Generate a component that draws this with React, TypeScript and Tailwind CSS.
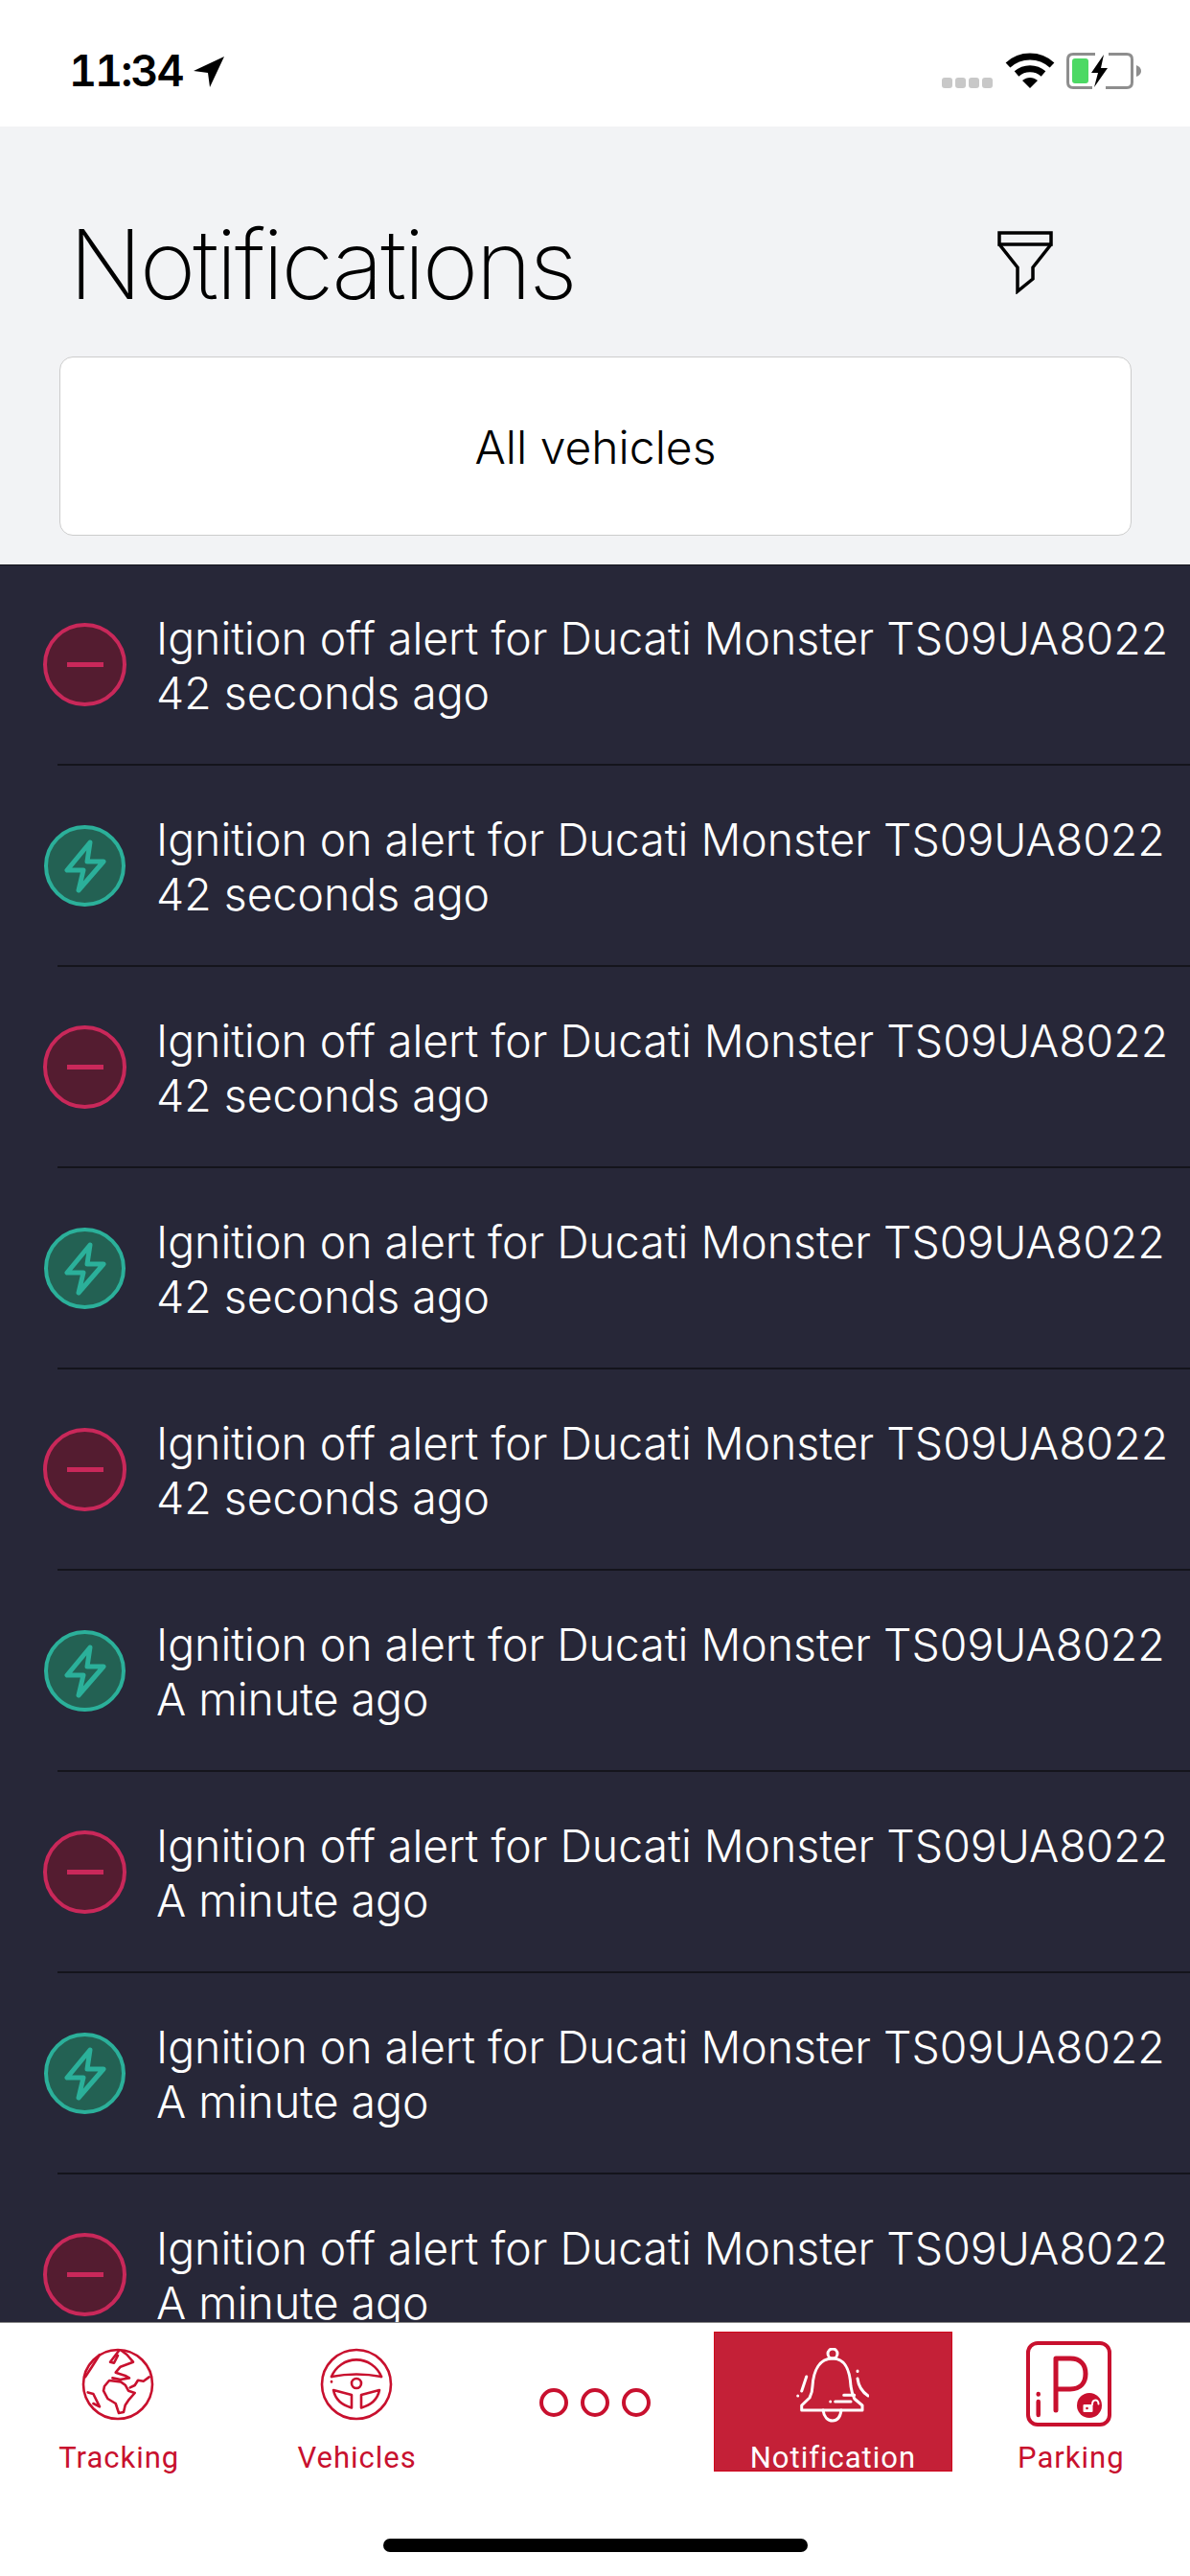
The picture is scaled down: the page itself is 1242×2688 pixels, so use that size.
// Notifications screen
const alerts = [
  { on: false, time: '42 seconds ago' },
  { on: true, time: '42 seconds ago' },
  { on: false, time: '42 seconds ago' },
  { on: true, time: '42 seconds ago' },
  { on: false, time: '42 seconds ago' },
  { on: true, time: 'A minute ago' },
  { on: false, time: 'A minute ago' },
  { on: true, time: 'A minute ago' },
  { on: false, time: 'A minute ago' },
]

function StatusBar() {
  return (
    <div className="flex h-[132px] shrink-0 items-start bg-white pl-[72px] pr-[49px] pt-[55px]">
      <span className="font-['Inter',sans-serif] text-[45px] leading-[38px] font-semibold tracking-[-2px] text-black tabular-nums">11:34</span>
      <svg className="ml-[11px] mt-[4px]" width="32" height="32" viewBox="0 0 32 32">
        <path d="M32 0 L0 15 L15 17 L17 32 Z" fill="#000" />
      </svg>
      <div className="ml-auto mt-[26px] flex gap-[3px]">
        <span className="h-[11px] w-[11px] rounded-[3px] bg-[#c8c8c8]" />
        <span className="h-[11px] w-[11px] rounded-[3px] bg-[#c8c8c8]" />
        <span className="h-[11px] w-[11px] rounded-[3px] bg-[#c8c8c8]" />
        <span className="h-[11px] w-[11px] rounded-[3px] bg-[#c8c8c8]" />
      </div>
      <svg className="ml-[13px]" width="52" height="38" viewBox="0 0 52 38" fill="none" stroke="#000" strokeWidth="7">
        <path d="M3 13 C16 1 36 1 49 13" />
        <path d="M12 22 C20 15 32 15 40 22" />
        <path d="M26 37 L18 29 C23 25 29 25 34 29 Z" fill="#000" stroke="none" />
      </svg>
      <svg className="ml-[12px]" width="80" height="38" viewBox="0 0 80 38" fill="none">
        <path d="M30 1.5 H7 Q1.5 1.5 1.5 7 V31 Q1.5 36.5 7 36.5 H27 M41 36.5 H63 Q68.5 36.5 68.5 31 V7 Q68.5 1.5 63 1.5 H44" stroke="#8e8e8e" strokeWidth="3" />
        <rect x="6" y="6" width="17" height="26" rx="3" fill="#4cd964" />
        <path d="M39 2 L26 21 H33 L29 36 L43 16 H36 Z" fill="#000" />
        <path d="M73 13 Q78 15 78 19 Q78 23 73 25 Z" fill="#8e8e8e" />
      </svg>
    </div>
  )
}

function Header() {
  return (
    <div className="h-[457px] shrink-0 bg-[#f2f3f5] pl-[62px] pr-[61px] pt-[84px]">
      <div className="flex h-[156px] items-start justify-between">
        <h1 className="ml-[10px] font-['Inter',sans-serif] text-[100px] leading-[120px] font-[150] tracking-[-2.9px] text-black">Notifications</h1>
        <svg className="mr-[82px] mt-[25px]" width="58" height="66" viewBox="0 0 58 66" fill="none" stroke="#000" strokeWidth="3.5">
          <path d="M2 2 H56 V14 H2 Z" />
          <path d="M2 14 L21 38 V63 L37 50 V38 L56 14" />
        </svg>
      </div>
      <div className="flex h-[187px] items-center justify-center rounded-[14px] border border-[#cccccc] bg-white pt-[2px] font-['Inter',sans-serif] text-[48px] font-[350] text-black">
        All vehicles
      </div>
    </div>
  )
}

function AlertIcon({ on }: { on: boolean }) {
  if (on) {
    return (
      <div className="flex h-[85px] w-[85px] items-center justify-center rounded-full border-[4px] border-[#2bb09a] bg-[#236153]">
        <svg width="44" height="56" viewBox="0 0 44 56" fill="none" stroke="#2bb09a" strokeWidth="5" strokeLinejoin="round" strokeLinecap="round">
          <path d="M27 3 L3 32 H20 L15 53 L41 23 H24 Z" />
        </svg>
      </div>
    )
  }
  return (
    <div className="flex h-[87px] w-[87px] items-center justify-center rounded-full border-[4px] border-[#c9285a] bg-[#541c30]">
      <span className="h-[5px] w-[38px] bg-[#c9285a]" />
    </div>
  )
}

function AlertRow({ on, time }: { on: boolean; time: string }) {
  return (
    <div className="h-[210px] shrink-0">
      <div className="flex h-[209px] items-center border-b-2 border-[#14141c] ml-[60px] -mb-px">
        <div className="-ml-[15px] flex w-[118px] shrink-0 justify-center pr-[31px]">
          <AlertIcon on={on} />
        </div>
        <div className="pt-[3px] font-['Inter',sans-serif] text-[46.4px] leading-[57px] font-light whitespace-nowrap text-white">
          <p>Ignition {on ? 'on' : 'off'} alert for Ducati Monster TS09UA8022</p>
          <p>{time}</p>
        </div>
      </div>
    </div>
  )
}

function GlobeIcon() {
  return (
    <svg className="mr-[3px] shrink-0" width="76" height="76" viewBox="0 0 76 76" fill="none" stroke="#c8102e" strokeWidth="2.6" strokeLinejoin="round" strokeLinecap="round">
      <circle cx="38" cy="38" r="36" />
      <path d="M24 40 L29 34 L41 35.4 L45.7 38.7 L49 44.7 L55.7 47 L49 54.7 L45.7 59.7 L44 67 L39 68 L35.7 58 L27.4 53 L23 44.7 Z" />
      <path d="M50.7 41.4 L55.7 39 L59 33.7 L64.7 34.7 L70.7 30.4" />
      <path d="M32.4 31.4 L40.7 33 L50 31.4 L45.7 29 L35.7 25.7 L40.7 19.7 L54 14.7 L47.4 7 L42 3" />
      <path d="M39 3 L30 14.7 L34 15.7 L38 8" />
      <path d="M4 30.4 L11.4 19 L19 7" />
      <path d="M6.7 46.4 L12.4 48 L19 61.4 L12.4 58" />
    </svg>
  )
}

function WheelIcon() {
  return (
    <svg className="mr-[1px] shrink-0" width="76" height="76" viewBox="0 0 76 76" fill="none" stroke="#c8102e" strokeWidth="2.6" strokeLinejoin="round" strokeLinecap="round">
      <circle cx="38" cy="38" r="36" />
      <path d="M12 30 A28 28 0 0 1 64 30" />
      <path d="M12 30 Q38 25 64 30" />
      <path d="M12 35 V35.5" />
      <circle cx="38" cy="37" r="5" />
      <path d="M14 44 L33 49 V62.4 C24 60 16 54 14 44 Z" />
      <path d="M62 44 L43 49 V62.4 C52 60 60 54 62 44 Z" />
    </svg>
  )
}

function BellIcon() {
  return (
    <svg className="shrink-0" width="76" height="78" viewBox="0 0 76 78" fill="none" stroke="#fff" strokeWidth="3" strokeLinecap="round" strokeLinejoin="round">
      <circle cx="38" cy="6" r="5" />
      <path d="M5.7 65 V60 L14 52 C16 48 17 44 17 40 C18 24 24 11 38 11 C52 11 56 24 57 40 C57.5 44 59 49 60.7 53 L69 60 V65 Z" />
      <path d="M28 65 C29 72 33 76 38 76 C43 76 46 72 47 65" />
      <path d="M10.7 30 L5.7 45 M1.7 50 V50 M64 24 V24.5 M64 32 C65 40 69 46 75 50" />
      <path d="M40.7 56 H57 M35.7 56 V56 M49.7 49.3 H60.7" />
    </svg>
  )
}

function ParkingIcon() {
  return (
    <svg className="mr-[5px] shrink-0" width="89" height="89" viewBox="0 0 89 89" fill="none" stroke="#c8102e" strokeWidth="4" strokeLinecap="round" strokeLinejoin="round">
      <rect x="2" y="2" width="85" height="85" rx="10" />
      <path d="M31 72 V18 H46 C57 18 62 25 62 34 C62 43 57 50 46 50 H31" strokeWidth="5" />
      <path d="M12.7 63 V77 M12.7 55 V55.5" strokeWidth="4.5" />
      <circle cx="66" cy="67" r="13" fill="#c8102e" stroke="none" />
      <rect x="59.5" y="66" width="10" height="8" rx="1" fill="#fff" stroke="none" />
      <circle cx="63.5" cy="70" r="1.3" fill="#c8102e" stroke="none" />
      <path d="M69 66 C69 60 75.5 60 75.5 65.5" stroke="#fff" strokeWidth="2" />
    </svg>
  )
}

function TabLabel({ children }: { children: string }) {
  return <span className="font-['Roboto',sans-serif] text-[31px] leading-[36px] tracking-[1px]">{children}</span>
}

function TabBar() {
  return (
    <div className="h-[265px] shrink-0 border-t border-[#8a8a8a] bg-white">
      <div className="grid grid-cols-5 pt-[9px] text-[#c8102e]">
        <div className="flex h-[146px] flex-col items-center pt-[17px]">
          <GlobeIcon />
          <div className="mt-[21px]"><TabLabel>Tracking</TabLabel></div>
        </div>
        <div className="flex h-[146px] flex-col items-center pt-[17px]">
          <WheelIcon />
          <div className="mt-[21px]"><TabLabel>Vehicles</TabLabel></div>
        </div>
        <div className="flex h-[146px] items-start justify-center gap-[13px] pt-[59px]">
          <span className="h-[30px] w-[30px] rounded-full border-[4px] border-[#c8102e]" />
          <span className="h-[30px] w-[30px] rounded-full border-[4px] border-[#c8102e]" />
          <span className="h-[30px] w-[30px] rounded-full border-[4px] border-[#c8102e]" />
        </div>
        <div className="flex h-[146px] flex-col items-center border border-[#d0021b] bg-[#c42037] pt-[16px] text-white">
          <BellIcon />
          <div className="mt-[19px]"><TabLabel>Notification</TabLabel></div>
        </div>
        <div className="flex h-[146px] flex-col items-center pt-[10px]">
          <ParkingIcon />
          <div className="mt-[15px]"><TabLabel>Parking</TabLabel></div>
        </div>
      </div>
      <div className="mx-auto mt-[70px] h-[14px] w-[443px] rounded-full bg-black" />
    </div>
  )
}

export default function App() {
  return (
    <div className="flex h-[2688px] w-[1242px] flex-col overflow-hidden bg-white">
      <StatusBar />
      <Header />
      <div className="min-h-0 flex-1 overflow-hidden border-t border-[#14141c] bg-[#272738]">
        {alerts.map((a, i) => (
          <AlertRow key={i} on={a.on} time={a.time} />
        ))}
      </div>
      <TabBar />
    </div>
  )
}
